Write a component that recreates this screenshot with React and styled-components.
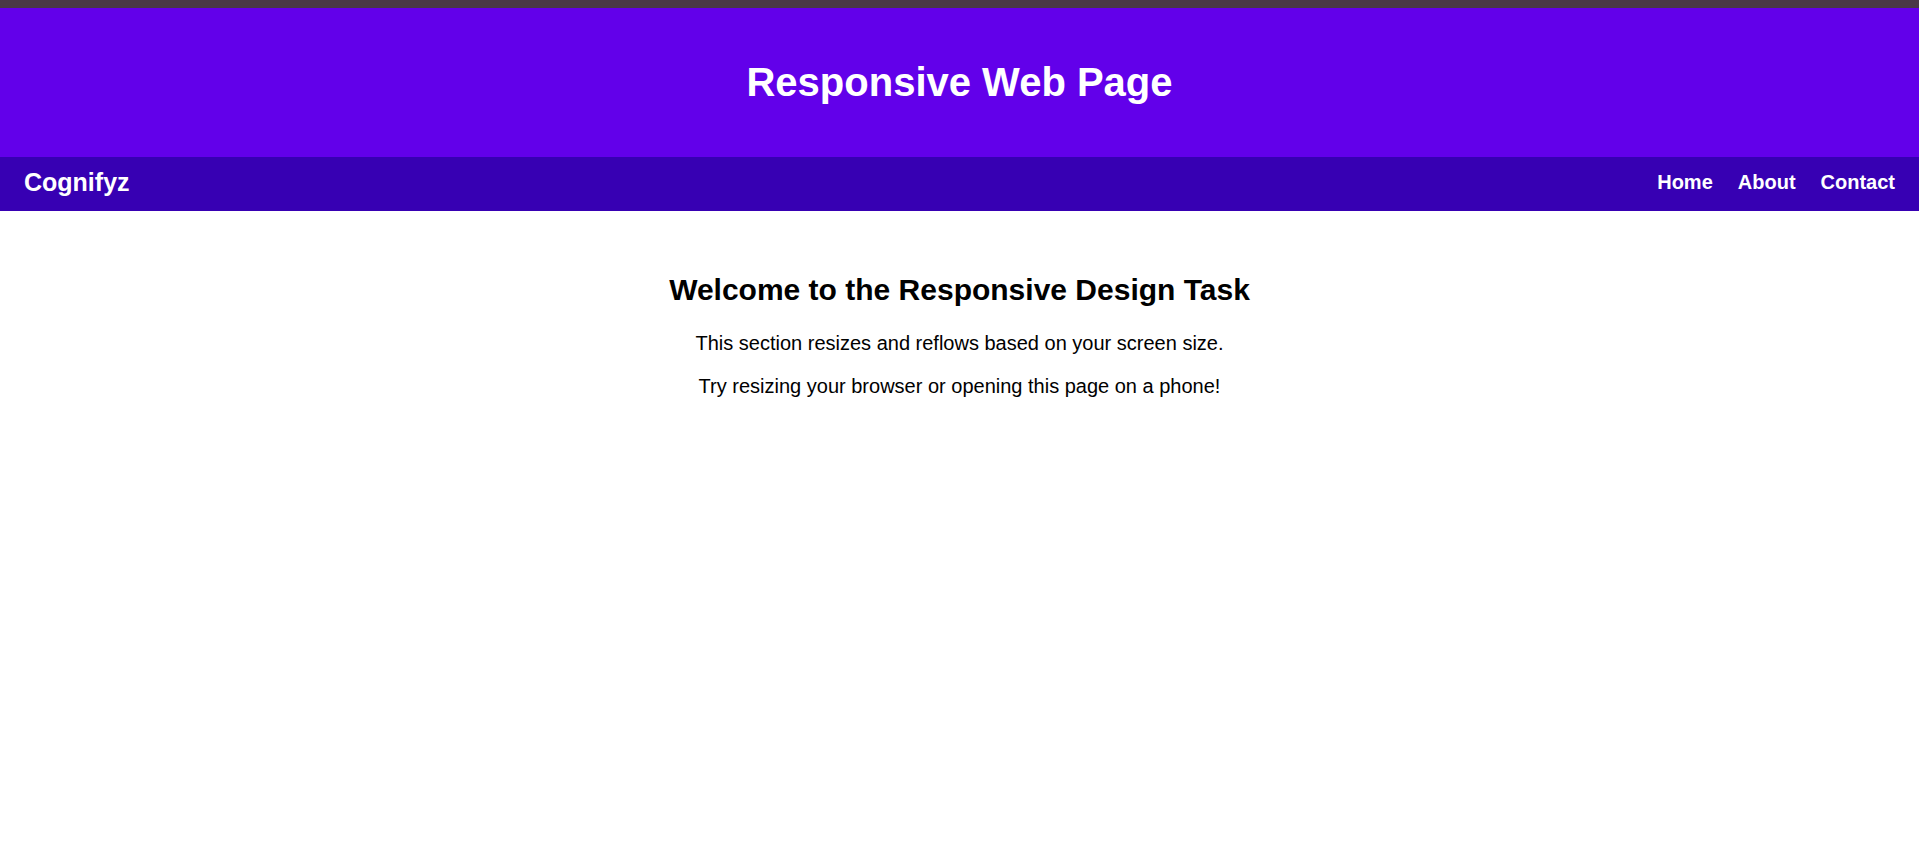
import React from 'react'
import styled, { createGlobalStyle } from 'styled-components'

const GlobalStyle = createGlobalStyle`
    html, body {
        margin:0;
        padding:0;
        background:#ffffff;
    }
    body {
        font-family:"Liberation Sans", Arial, sans-serif;
        font-size:20px;
        color:#000;
    }
`

const links = ['Home', 'About', 'Contact']

function App() {
    return (
        <>
            <GlobalStyle />
            <TopStrip />
            <Header>
                <Title>Responsive Web Page</Title>
            </Header>
            <Nav>
                <Logo>Cognifyz</Logo>
                <NavLinks>
                    {links.map(link => (
                        <NavLink key={link} href="#">{link}</NavLink>
                    ))}
                </NavLinks>
            </Nav>
            <Content>
                <Heading>Welcome to the Responsive Design Task</Heading>
                <Text>This section resizes and reflows based on your screen size.</Text>
                <Text>Try resizing your browser or opening this page on a phone!</Text>
            </Content>
        </>
    )
}

export default App

const TopStrip = styled.div`
    height:8px;
    background-color:#4a3848;
`
const Header = styled.header`
    background-color:#6200ea;
    color:white;
    height:149px;
    display:flex;
    justify-content:center;
    align-items:center;
`
const Title = styled.h1`
    margin:0;
    font-size:2em;
    font-weight:bold;
`
const Nav = styled.nav`
    box-sizing:border-box;
    background-color:#3700b3;
    height:54px;
    padding:0 24px 3px;
    display:flex;
    justify-content:space-between;
    align-items:center;
`
const Logo = styled.div`
    color:white;
    font-size:1.25em;
    font-weight:bold;
`
const NavLinks = styled.div`
    display:flex;
    gap:25px;
`
const NavLink = styled.a`
    color:white;
    text-decoration:none;
    font-weight:bold;
`
const Content = styled.main`
    padding:37px 20px;
    text-align:center;
`
const Heading = styled.h2`
    font-size:1.5em;
    margin:0.83em 0;
`
const Text = styled.p`
    margin:1em 0;
`
